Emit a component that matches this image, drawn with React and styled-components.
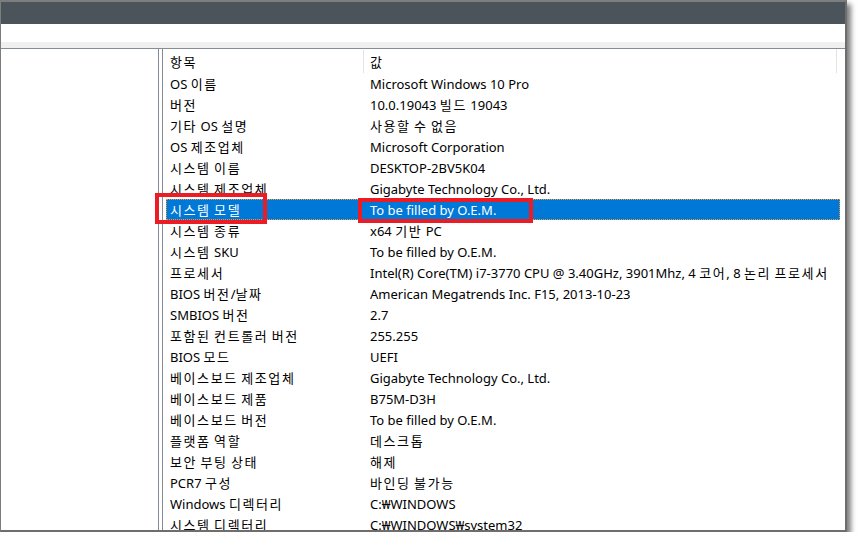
import React from 'react';
import styled, { createGlobalStyle } from 'styled-components';

const rows = [
  ['OS 이름', 'Microsoft Windows 10 Pro'],
  ['버전', '10.0.19043 빌드 19043'],
  ['기타 OS 설명', '사용할 수 없음'],
  ['OS 제조업체', 'Microsoft Corporation'],
  ['시스템 이름', 'DESKTOP-2BV5K04'],
  ['시스템 제조업체', 'Gigabyte Technology Co., Ltd.'],
  ['시스템 모델', 'To be filled by O.E.M.', true],
  ['시스템 종류', 'x64 기반 PC'],
  ['시스템 SKU', 'To be filled by O.E.M.'],
  ['프로세서', 'Intel(R) Core(TM) i7-3770 CPU @ 3.40GHz, 3901Mhz, 4 코어, 8 논리 프로세서'],
  ['BIOS 버전/날짜', 'American Megatrends Inc. F15, 2013-10-23'],
  ['SMBIOS 버전', '2.7'],
  ['포함된 컨트롤러 버전', '255.255'],
  ['BIOS 모드', 'UEFI'],
  ['베이스보드 제조업체', 'Gigabyte Technology Co., Ltd.'],
  ['베이스보드 제품', 'B75M-D3H'],
  ['베이스보드 버전', 'To be filled by O.E.M.'],
  ['플랫폼 역할', '데스크톱'],
  ['보안 부팅 상태', '해제'],
  ['PCR7 구성', '바인딩 불가능'],
  ['Windows 디렉터리', 'C:₩WINDOWS'],
  ['시스템 디렉터리', 'C:₩WINDOWS₩system32'],
];

// hangul runs get a little extra tracking so they take the width Malgun Gothic gives them
function Txt({ children }) {
  const parts = children.split(/([\uac00-\ud7a3]+)/);
  return (
    <span>
      {parts.map((p, i) =>
        /[\uac00-\ud7a3]/.test(p) ? <Hangul key={i}>{p}</Hangul> : p
      )}
    </span>
  );
}

export default function App() {
  return (
    <>
      <GlobalStyle />
      <Frame>
        <TitleBar />
        <MenuBar />
        <ToolStrip />
        <Body>
          <TreePane />
          <ListPane>
            <HeaderRow>
              <HeadCell><Txt>항목</Txt></HeadCell>
              <HeadCell $sep><Txt>값</Txt></HeadCell>
            </HeaderRow>
            {rows.map(([k, v, sel]) => (
              <Row key={k} $selected={sel}>
                <KeyCell>
                  <Txt>{k}</Txt>
                  {sel && <Mark $l={-11} $t={-6} $w={112} $h={31} />}
                </KeyCell>
                <ValCell>
                  <Txt>{v}</Txt>
                  {sel && <Mark $l={-5} $t={-1} $w={175} $h={25} />}
                </ValCell>
              </Row>
            ))}
          </ListPane>
        </Body>
      </Frame>
    </>
  );
}

const GlobalStyle = createGlobalStyle`
  body {
    margin: 0;
    background: #fff;
    font-family: "Noto Sans", "Noto Sans CJK KR", sans-serif;
  }
`;

const Frame = styled.div`
  width: 847px;
  height: 532px;
  box-sizing: border-box;
  border-top: 2px solid #7d7d7d;
  border-left: 1px solid #7d7d7d;
  border-right: 2px solid #6e6e6e;
  border-bottom: 2px solid #6e6e6e;
  box-shadow: 4px 4px 5px rgba(0, 0, 0, 0.5);
  display: flex;
  flex-direction: column;
  overflow: hidden;
  background: #fff;
`;

const TitleBar = styled.div`
  height: 22px;
  background: #4b545b;
  flex-shrink: 0;
`;

const MenuBar = styled.div`
  height: 18px;
  background: #fff;
  flex-shrink: 0;
`;

const ToolStrip = styled.div`
  height: 6px;
  background: #f0f0f0;
  flex-shrink: 0;
`;

const Body = styled.div`
  flex: 1;
  display: flex;
  gap: 3px;
  border-top: 1px solid #868c94;
  min-height: 0;
`;

const TreePane = styled.div`
  width: 157px;
  border-right: 1px solid #868c94;
  flex-shrink: 0;
`;

const ListPane = styled.div`
  flex: 1;
  border-left: 1px solid #868c94;
  padding-left: 3px;
  font-size: 13px;
  color: #000;
`;

const Hangul = styled.span`
  letter-spacing: 1.6px;
`;

const HeaderRow = styled.div`
  display: flex;
  height: 24px;
  width: 670px;
  border-right: 1px solid #e3e3e3;
`;

const HeadCell = styled.div`
  display: flex;
  align-items: center;
  white-space: pre;
  padding-left: ${(p) => (p.$sep ? '6px' : '4px')};
  width: ${(p) => (p.$sep ? 'auto' : '193px')};
  flex: ${(p) => (p.$sep ? 1 : 'none')};
  border-left: ${(p) => (p.$sep ? '1px solid #e3e3e3' : 'none')};
  margin-top: 1px;
`;

const Row = styled.div`
  display: flex;
  height: 21px;
  width: 674px;
  box-sizing: border-box;
  white-space: pre;
  background: ${(p) => (p.$selected ? '#0078d7' : 'transparent')};
  color: ${(p) => (p.$selected ? '#fff' : '#000')};
  outline: ${(p) => (p.$selected ? '1px dotted #e89a3c' : 'none')};
  outline-offset: -1px;
`;

const KeyCell = styled.div`
  position: relative;
  display: flex;
  align-items: center;
  width: 197px;
  padding-left: 4px;
  box-sizing: border-box;
  flex-shrink: 0;
`;

const ValCell = styled.div`
  position: relative;
  display: flex;
  align-items: center;
  padding-left: 7px;
  flex: 1;
`;

const Mark = styled.span`
  position: absolute;
  left: ${(p) => p.$l}px;
  top: ${(p) => p.$t}px;
  width: ${(p) => p.$w}px;
  height: ${(p) => p.$h}px;
  box-sizing: border-box;
  border: 4px solid #ec1c24;
  pointer-events: none;
`;
